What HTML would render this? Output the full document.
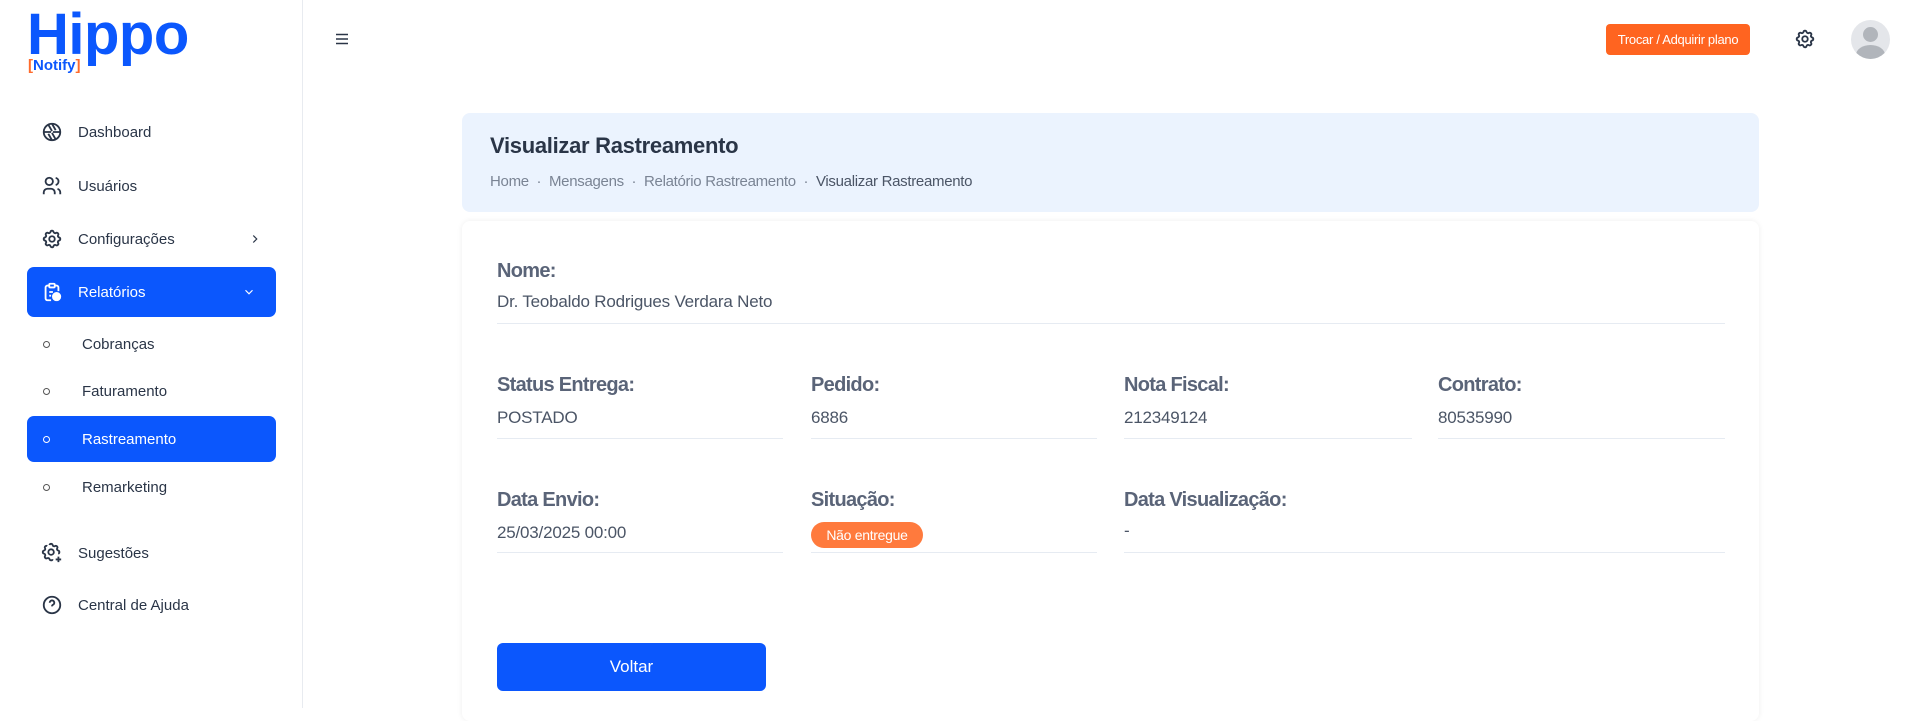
<!DOCTYPE html>
<html><head><meta charset="utf-8"><style>
*{box-sizing:border-box;margin:0;padding:0}
body{width:1918px;height:708px;overflow:hidden;background:#fff;font-family:"Liberation Sans",sans-serif;position:relative;color:#2a3547}
.sb{position:absolute;left:0;top:0;width:303px;height:708px;border-right:1px solid #e8ebf0;background:#fff}
.abs{position:absolute}
.mi{position:absolute;left:27px;width:249px;height:46px;display:flex;align-items:center;font-size:15px;color:#2a3547}
.mi svg{position:absolute;left:14px}
.mi span{position:absolute;left:51px}
.act{background:#0b57fd;border-radius:7px;color:#fff}
.sub{position:absolute;left:27px;width:249px;height:46px;font-size:15px;display:flex;align-items:center}
.sub i{position:absolute;left:16px;width:7px;height:7px;border:1px solid #555;border-radius:50%}
.sub span{position:absolute;left:55px}
.lbl{position:absolute;font-size:20px;font-weight:bold;color:#5a6478;letter-spacing:-0.7px}
.val{position:absolute;font-size:17px;color:#4b5566;letter-spacing:-0.2px}
.ln{position:absolute;height:1px;background:#e6ebf2}
</style></head><body>
<div class="sb">
 <div class="abs" style="left:27px;top:6px;font-size:58px;font-weight:bold;color:#0b57fd;letter-spacing:-0.5px;line-height:58px">Hippo</div>
 <div class="abs" style="left:28px;top:57px;font-size:15px;font-weight:bold;color:#0b57fd"><span style="color:#ff6b2c">[</span>Notify<span style="color:#ff6b2c">]</span></div>

 <div class="mi" style="top:109px"><svg width="22" height="22" viewBox="0 0 24 24" fill="none" stroke="#2a3547" stroke-width="2"><circle cx="12" cy="12" r="9"/><path d="M12 3l4 7M21 12h-8M16 20l-4-7M12 21l-4-7M3 12h8M8 4l4 7"/></svg><span>Dashboard</span></div>
 <div class="mi" style="top:163px"><svg width="22" height="22" viewBox="0 0 24 24" fill="none" stroke="#2a3547" stroke-width="2"><circle cx="9" cy="7" r="4"/><path d="M3 21v-2a4 4 0 0 1 4-4h4a4 4 0 0 1 4 4v2M16 3.1a4 4 0 0 1 0 7.8M21 21v-2a4 4 0 0 0-3-3.9"/></svg><span>Usuários</span></div>
 <div class="mi" style="top:216px"><svg width="22" height="22" viewBox="0 0 24 24" fill="none" stroke="#2a3547" stroke-width="2"><circle cx="12" cy="12" r="3"/><path d="M10.3 4.3c.4-1.8 2.9-1.8 3.4 0a1.7 1.7 0 0 0 2.6 1.1c1.5-.9 3.300.8 2.4 2.4a1.7 1.7 0 0 0 1 2.5c1.8.5 1.8 3 0 3.4a1.7 1.7 0 0 0-1 2.6c.9 1.5-.8 3.3-2.4 2.4a1.7 1.7 0 0 0-2.6 1c-.4 1.8-2.9 1.8-3.4 0a1.7 1.7 0 0 0-2.5-1c-1.6.9-3.3-.9-2.4-2.4a1.7 1.7 0 0 0-1.100-2.6c-1.8-.4-1.8-2.9 0-3.4a1.7 1.7 0 0 0 1.1-2.5c-.9-1.6.8-3.3 2.4-2.4 1 .6 2.3.1 2.6-1.1z"/></svg><span>Configurações</span><svg style="left:221px" width="14" height="14" viewBox="0 0 24 24" fill="none" stroke="#2a3547" stroke-width="2"><path d="M9 6l6 6-6 6"/></svg></div>
 <div class="mi act" style="top:267px;height:50px"><svg width="22" height="22" viewBox="0 0 24 24" fill="none" stroke="#fff" stroke-width="2"><path d="M9 5H7a2 2 0 0 0-2 2v12a2 2 0 0 0 2 2h4M15 5h2a2 2 0 0 1 2 2v4"/><rect x="9" y="3" width="6" height="4" rx="1"/><path d="M9 12h4M9 16h2"/><circle cx="17" cy="17" r="4" fill="#fff"/></svg><span style="color:#fff">Relatórios</span><svg style="left:215px" width="14" height="14" viewBox="0 0 24 24" fill="none" stroke="#fff" stroke-width="2"><path d="M6 9l6 6 6-6"/></svg></div>
 <div class="sub" style="top:321px"><i></i><span>Cobranças</span></div>
 <div class="sub" style="top:368px"><i></i><span>Faturamento</span></div>
 <div class="sub act" style="top:416px"><i style="border-color:#fff"></i><span>Rastreamento</span></div>
 <div class="sub" style="top:464px"><i></i><span>Remarketing</span></div>
 <div class="mi" style="top:530px"><svg width="22" height="22" viewBox="0 0 24 24" fill="none" stroke="#2a3547" stroke-width="2"><circle cx="11" cy="11" r="3"/><path d="M9.3 3.3c.4-1.8 2.9-1.8 3.4 0a1.7 1.7 0 0 0 2.6 1.1c1.5-.9 3.3.8 2.4 2.4a1.7 1.7 0 0 0 1 2.5c1.8.5 1.8 3 0 3.4M12.7 18.7c-.4 1.8-2.9 1.8-3.4 0a1.7 1.7 0 0 0-2.5-1c-1.6.9-3.3-.9-2.4-2.4a1.7 1.7 0 0 0-1.1-2.6c-1.8-.4-1.8-2.9 0-3.4a1.7 1.7 0 0 0 1.1-2.5c-.9-1.6.8-3.3 2.4-2.4M19 16v6M16 19h6"/></svg><span>Sugestões</span></div>
 <div class="mi" style="top:582px"><svg width="22" height="22" viewBox="0 0 24 24" fill="none" stroke="#2a3547" stroke-width="2"><circle cx="12" cy="12" r="9"/><path d="M9.5 9.5a2.5 2.5 0 1 1 3.5 2.3c-.6.3-1 .9-1 1.7M12 17v.01"/></svg><span>Central de Ajuda</span></div>
</div>

<svg class="abs" style="left:333px;top:30px" width="18" height="18" viewBox="0 0 24 24" fill="none" stroke="#2a3547" stroke-width="2"><path d="M4 6h16M4 12h16M4 18h16"/></svg>
<div class="abs" style="left:1606px;top:24px;width:144px;height:31px;background:#ff6420;border-radius:4px;color:#fff;font-size:13px;letter-spacing:-0.3px;text-align:center;line-height:31px">Trocar / Adquirir plano</div>
<svg class="abs" style="left:1794px;top:28px" width="22" height="22" viewBox="0 0 24 24" fill="none" stroke="#2a3547" stroke-width="2"><circle cx="12" cy="12" r="3"/><path d="M10.3 4.3c.4-1.8 2.9-1.8 3.4 0a1.7 1.7 0 0 0 2.6 1.1c1.5-.9 3.3.8 2.4 2.4a1.7 1.7 0 0 0 1 2.5c1.8.5 1.8 3 0 3.4a1.7 1.7 0 0 0-1 2.6c.9 1.5-.8 3.3-2.4 2.4a1.7 1.7 0 0 0-2.6 1c-.4 1.8-2.9 1.8-3.4 0a1.7 1.7 0 0 0-2.5-1c-1.6.9-3.3-.9-2.4-2.4a1.7 1.7 0 0 0-1.1-2.6c-1.8-.4-1.8-2.9 0-3.4a1.7 1.7 0 0 0 1.1-2.5c-.9-1.6.8-3.3 2.4-2.4 1 .6 2.3.1 2.6-1.1z"/></svg>
<div class="abs" style="left:1851px;top:20px;width:39px;height:39px;border-radius:50%;background:#e4e6ea;overflow:hidden"><div class="abs" style="left:12px;top:7px;width:15px;height:15px;border-radius:50%;background:#b1b5bb"></div><div class="abs" style="left:5px;top:25px;width:29px;height:20px;border-radius:50% 50% 0 0;background:#b1b5bb"></div></div>

<div class="abs" style="left:462px;top:113px;width:1297px;height:99px;background:#ebf3fe;border-radius:8px"></div>
<div class="abs" style="left:490px;top:133px;font-size:22px;font-weight:bold;color:#2a3547;letter-spacing:-0.3px">Visualizar Rastreamento</div>
<div class="abs" style="left:490px;top:173px;font-size:15px;color:#7a8494;letter-spacing:-0.3px">Home &nbsp;·&nbsp; Mensagens &nbsp;·&nbsp; Relatório Rastreamento &nbsp;·&nbsp; <span style="color:#4b5566">Visualizar Rastreamento</span></div>

<div class="abs" style="left:462px;top:221px;width:1297px;height:500px;background:#fff;border-radius:8px;box-shadow:0 0 6px rgba(0,0,0,.07)"></div>

<div class="lbl" style="left:497px;top:260px">Nome:</div>
<div class="val" style="left:497px;top:292px">Dr. Teobaldo Rodrigues Verdara Neto</div>
<div class="ln" style="left:497px;top:323px;width:1228px"></div>

<div class="lbl" style="left:497px;top:374px">Status Entrega:</div>
<div class="val" style="left:497px;top:408px">POSTADO</div>
<div class="ln" style="left:497px;top:438px;width:286px"></div>
<div class="lbl" style="left:811px;top:374px">Pedido:</div>
<div class="val" style="left:811px;top:408px">6886</div>
<div class="ln" style="left:811px;top:438px;width:286px"></div>
<div class="lbl" style="left:1124px;top:374px">Nota Fiscal:</div>
<div class="val" style="left:1124px;top:408px">212349124</div>
<div class="ln" style="left:1124px;top:438px;width:288px"></div>
<div class="lbl" style="left:1438px;top:374px">Contrato:</div>
<div class="val" style="left:1438px;top:408px">80535990</div>
<div class="ln" style="left:1438px;top:438px;width:287px"></div>

<div class="lbl" style="left:497px;top:489px">Data Envio:</div>
<div class="val" style="left:497px;top:523px">25/03/2025 00:00</div>
<div class="ln" style="left:497px;top:552px;width:286px"></div>
<div class="lbl" style="left:811px;top:489px">Situação:</div>
<div class="abs" style="left:811px;top:522px;width:112px;height:26px;border-radius:13px;background:#ff7a3d;color:#fff;font-size:14px;letter-spacing:-0.3px;text-align:center;line-height:26px">Não entregue</div>
<div class="ln" style="left:811px;top:552px;width:286px"></div>
<div class="lbl" style="left:1124px;top:489px">Data Visualização:</div>
<div class="val" style="left:1124px;top:521px">-</div>
<div class="ln" style="left:1124px;top:552px;width:601px"></div>

<div class="abs" style="left:497px;top:643px;width:269px;height:48px;background:#0b57fd;border-radius:6px;color:#fff;font-size:17px;text-align:center;line-height:48px">Voltar</div>
</body></html>
